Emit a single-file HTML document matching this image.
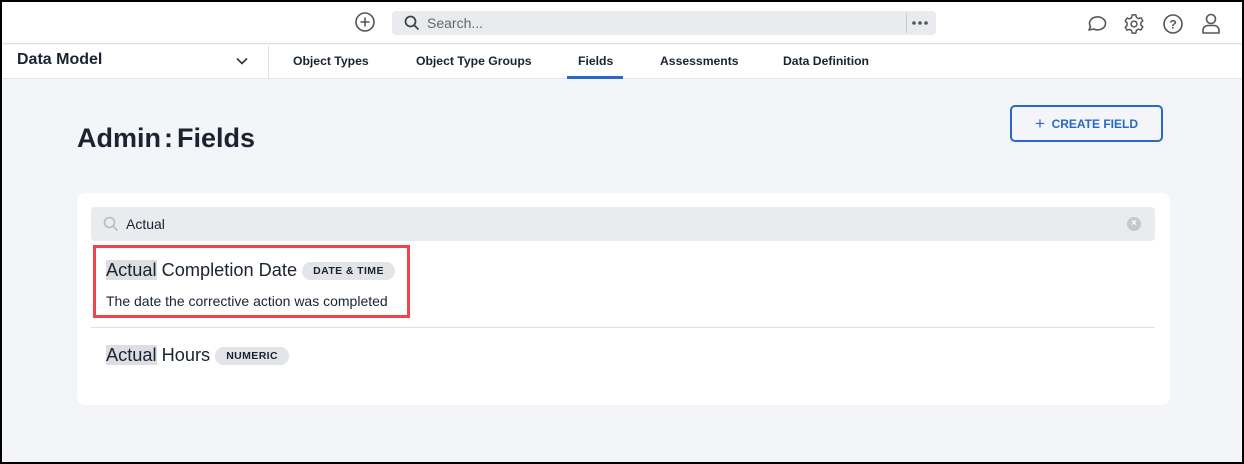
<!DOCTYPE html>
<html><head><style>
*{box-sizing:border-box;margin:0;padding:0}
body{width:1244px;height:464px;overflow:hidden;background:#000;font-family:"Liberation Sans",sans-serif;color:#1a2330}
.frame{position:absolute;left:2px;top:2px;width:1240px;height:460px;background:#f4f5f9;overflow:hidden}
.top{position:absolute;left:0;top:0;width:1240px;height:42px;background:#fff;border-bottom:1px solid #dcdfe4}
.sub{position:absolute;left:0;top:43px;width:1240px;height:34px;background:#fff;border-bottom:1px solid #e4e6ea}
.abs{position:absolute}
.search{left:390px;top:9px;width:544px;height:24px;background:#e9ebef;border-radius:4px}
.tab{position:absolute;top:9px;font-size:12.2px;font-weight:bold;color:#1a2330}
.card{left:75px;top:191px;width:1093px;height:212px;background:#fff;border-radius:8px}
.chip{display:inline-block;background:#e2e4e8;border-radius:9px;font-size:10.5px;font-weight:bold;padding:3px 11px;vertical-align:2px;letter-spacing:.4px}
.hl{background:#dcdee2}
</style></head><body><div class="frame">
<div class="top">
<svg class="abs" style="left:352px;top:9px" width="22" height="22" viewBox="0 0 22 22"><circle cx="11" cy="11" r="9" fill="none" stroke="#555" stroke-width="1.6"/><path d="M11 6.5v9M6.5 11h9" stroke="#555" stroke-width="1.6"/></svg>
<div class="abs search">
<svg class="abs" style="left:12px;top:4px" width="16" height="16" viewBox="0 0 16 16"><circle cx="6.5" cy="6.5" r="5" fill="none" stroke="#444" stroke-width="1.8"/><path d="M10 10l4.5 4.5" stroke="#444" stroke-width="1.8"/></svg>
<span class="abs" style="left:35px;top:4px;font-size:14px;color:#666">Search...</span>
<div class="abs" style="left:514px;top:2px;width:1px;height:20px;background:#c8cbd0"></div>
<svg class="abs" style="left:519px;top:9px" width="20" height="6" viewBox="0 0 20 6"><circle cx="3" cy="3" r="1.8" fill="#555"/><circle cx="9" cy="3" r="1.8" fill="#555"/><circle cx="15" cy="3" r="1.8" fill="#555"/></svg>
</div>
<svg class="abs" style="left:1083px;top:11px" width="22" height="22" viewBox="0 0 22 22"><path d="M4 17l1.5-3.5A8 6.5 0 1 1 8.5 16z" fill="none" stroke="#555" stroke-width="1.6" stroke-linejoin="round"/></svg>
<svg class="abs" style="left:1121px;top:11px" width="22" height="22" viewBox="0 0 24 24"><path d="M10 2h4l.6 2.8 2.3 1.3 2.7-.9 2 3.4-2.1 1.9v2.7l2.1 1.9-2 3.4-2.7-.9-2.3 1.3L14 22h-4l-.6-2.8-2.3-1.3-2.7.9-2-3.4 2.1-1.9V10.8L2.4 8.9l2-3.4 2.7.9 2.3-1.3z" fill="none" stroke="#555" stroke-width="1.6" stroke-linejoin="round"/><circle cx="12" cy="12" r="3.2" fill="none" stroke="#555" stroke-width="1.6"/></svg>
<svg class="abs" style="left:1160px;top:11px" width="22" height="22" viewBox="0 0 22 22"><circle cx="11" cy="11" r="9" fill="none" stroke="#555" stroke-width="1.6"/><text x="11" y="15.5" font-size="12" font-weight="bold" text-anchor="middle" fill="#555" font-family="Liberation Sans">?</text></svg>
<svg class="abs" style="left:1198px;top:10px" width="22" height="24" viewBox="0 0 22 24"><circle cx="11" cy="7" r="4.5" fill="none" stroke="#555" stroke-width="1.6"/><path d="M3 21v-2.5a5 5 0 0 1 5-5h6a5 5 0 0 1 5 5V21z" fill="none" stroke="#555" stroke-width="1.6" stroke-linejoin="round"/></svg>
</div>
<div class="sub">
<span class="abs" style="left:15px;top:6px;font-size:16px;font-weight:bold">Data Model</span>
<svg class="abs" style="left:233px;top:11px" width="14" height="10" viewBox="0 0 14 10"><path d="M2 2.5l5 5 5-5" fill="none" stroke="#333" stroke-width="1.6"/></svg>
<div class="abs" style="left:266px;top:1px;width:1px;height:33px;background:#dcdfe4"></div>
<span class="tab" style="left:291px">Object Types</span>
<span class="tab" style="left:414px">Object Type Groups</span>
<span class="tab" style="left:576px">Fields</span>
<div class="abs" style="left:565px;top:31px;width:56px;height:3px;background:#2a68c8"></div>
<span class="tab" style="left:658px">Assessments</span>
<span class="tab" style="left:781px">Data Definition</span>
</div>
<div class="abs" style="left:75px;top:121px;font-size:27px;font-weight:bold">Admin<span style="margin:0 4px 0 3px">:</span>Fields</div>
<div class="abs" style="left:1008px;top:103px;width:153px;height:37px;border:2px solid #2a68c8;border-radius:5px;color:#2a68c8;font-size:12px;font-weight:bold;text-align:center;line-height:33px"><span style="font-size:17px;font-weight:normal;vertical-align:-1px">+</span>&nbsp; CREATE FIELD</div>
<div class="abs card">
<div class="abs" style="left:14px;top:14px;width:1064px;height:34px;background:#e9ebef;border-radius:4px">
<svg class="abs" style="left:12px;top:9px" width="16" height="16" viewBox="0 0 16 16"><circle cx="6.5" cy="6.5" r="5" fill="none" stroke="#b8bbc0" stroke-width="1.6"/><path d="M10 10l4.5 4.5" stroke="#b8bbc0" stroke-width="1.6"/></svg>
<span class="abs" style="left:35px;top:9px;font-size:14px">Actual</span>
<div class="abs" style="left:1036px;top:10px;width:14px;height:14px;border-radius:50%;background:#c8c8c8;color:#fff;font-size:10px;line-height:14px;text-align:center;font-weight:bold">×</div>
</div>
<div class="abs" style="left:16px;top:52px;width:317px;height:73px;border:3px solid #f0434b"></div>
<div class="abs" style="left:29px;top:67px;font-size:18.2px"><span class="hl">Actual</span> Completion Date <span class="chip">DATE &amp; TIME</span></div>
<div class="abs" style="left:29px;top:100px;font-size:14px">The date the corrective action was completed</div>
<div class="abs" style="left:14px;top:134px;width:1064px;height:1px;background:#dcdfe4"></div>
<div class="abs" style="left:29px;top:152px;font-size:18.2px"><span class="hl">Actual</span> Hours <span class="chip">NUMERIC</span></div>
</div>
</div></body></html>
